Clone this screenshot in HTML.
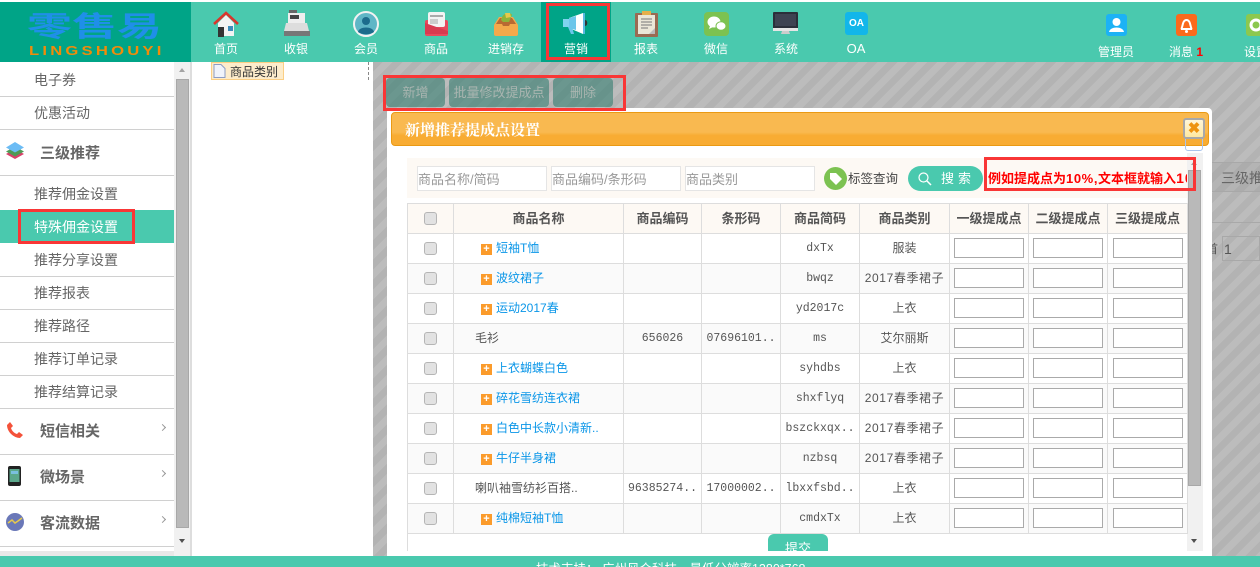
<!DOCTYPE html>
<html lang="zh"><head><meta charset="utf-8"><title>零售易</title>
<style>
html,body{margin:0;padding:0;width:1260px;height:567px;overflow:hidden;background:#fff}
*{box-sizing:border-box}
body{position:relative;font-family:"Liberation Sans","WenQuanYi Zen Hei","Noto Sans CJK SC",sans-serif;font-size:13px;color:#555}
.a{position:absolute}
.nav{position:absolute;top:2px;height:60px;background:#4ac9ae;left:191px;width:1069px}
.ni{position:absolute;top:41px;width:70px;text-align:center;color:#fff;font-size:12px;line-height:16px}
.ic{position:absolute}
.s{position:absolute;left:0;width:174px;color:#666;font-size:14px;line-height:16px;padding-left:34px}
.ln{position:absolute;left:0;width:174px;height:1px;background:#d0d0d0}
.h{position:absolute;left:40px;font-size:15px;font-weight:bold;color:#666;line-height:18px}
.ar{position:absolute;left:160px;width:5px;height:5px;border-top:1px solid #999;border-right:1px solid #999;transform:rotate(45deg)}
.btn{position:absolute;top:78px;height:29px;background:rgba(40,120,105,.55);border-radius:4px;color:#a9b5b0;text-align:center;line-height:29px;font-size:13px}
.fld{position:absolute;top:166px;height:25px;width:130px;background:#fff;border:1px solid #e5e5e5;color:#999;font-size:13px;line-height:25px;padding-left:0}
table{position:absolute;left:407px;top:203px;width:780px;table-layout:fixed;border-collapse:collapse;font-size:12px;color:#555}
td,th{border:1px solid #ddd;height:30px;padding:0 0 2px;text-align:center;overflow:hidden;white-space:nowrap}
th{background:#fdf9f4;font-size:13px;color:#555;font-weight:bold}
tr:nth-child(odd) td{background:#fafafa}
tr:nth-child(even) td{background:#fff}
td.m{font-family:"Liberation Mono","WenQuanYi Zen Hei",monospace;font-size:11.5px;padding-bottom:0}
.y{letter-spacing:.6px}
.n{text-align:left;padding-left:27px;color:#0a96e8;font-size:12px}
.n i{display:inline-block;width:11px;height:11px;background:#fb9b2b;color:#fff;font:bold 11px/10px "Liberation Sans",sans-serif;text-align:center;margin-right:4px;vertical-align:0}
.p{text-align:left;padding-left:21px;color:#555;font-size:12px}
.c{display:inline-block;width:13px;height:13px;background:#e2e2e2;border:1px solid #b5b5b5;border-radius:3px;vertical-align:middle}
.t{display:block;width:70px;height:20px;border:1px solid #aaa;background:#fff}
td.i{padding-left:4px;text-align:left}
td.i2{padding-left:5px;text-align:left}
</style></head><body>

<div class="a" style="left:0;top:2px;width:191px;height:60px;background:#00a487;overflow:hidden">
<div class="a" style="left:27px;top:-3px;width:140px;font:bold 45px/50px 'WenQuanYi Zen Hei','Noto Sans CJK SC',sans-serif;color:#1f8fe8;transform:scaleY(.62);transform-origin:center;white-space:nowrap">零售易</div>
<div class="a" style="left:29px;top:42px;font:bold 13px/14px 'Liberation Sans',sans-serif;color:#f08c0a;letter-spacing:2.5px;white-space:nowrap;transform:scaleX(1.28);transform-origin:0 0">LINGSHOUYI</div>
</div>
<div class="nav"></div>
<div class="a" style="left:541px;top:2px;width:70px;height:60px;background:#00a487"></div>
<div class="a" style="left:546px;top:3px;width:64px;height:57px;border:3px solid #f93636"></div>

<svg class="ic" style="left:213px;top:11px" width="26" height="26" viewBox="0 0 26 26"><path d="M5 12L13 4l8 8v13H5z" fill="#f3f3f3"/><rect x="5" y="16" width="6" height="10" fill="#333"/><rect x="15" y="15" width="5" height="5" fill="#3b8dbb"/><path d="M1 13L13 2l12 11" fill="none" stroke="#d9352c" stroke-width="2.6"/></svg>
<div class="ni" style="left:191px">首页</div>

<svg class="ic" style="left:283px;top:10px" width="27" height="27" viewBox="0 0 27 27"><rect x="6" y="0" width="8" height="3" fill="#666"/><rect x="5" y="3" width="17" height="10" fill="#eee"/><rect x="7" y="5" width="9" height="4" fill="#444"/><path d="M3 13h21l2 8H1z" fill="#ddd"/><rect x="1" y="21" width="26" height="5" fill="#777"/></svg>
<div class="ni" style="left:261px">收银</div>

<svg class="ic" style="left:353px;top:11px" width="26" height="26" viewBox="0 0 26 26"><circle cx="13" cy="13" r="12" fill="#5fb6c6" stroke="#f2f2f2" stroke-width="2"/><circle cx="13" cy="10" r="4" fill="#1c6c8c"/><path d="M5 21c1-6 15-6 16 0-4 3-12 3-16 0z" fill="#1c6c8c"/></svg>
<div class="ni" style="left:331px">会员</div>

<svg class="ic" style="left:424px;top:11px" width="24" height="26" viewBox="0 0 24 26"><rect x="1" y="9" width="23" height="16" rx="2" fill="#e9495d"/><rect x="4" y="1" width="17" height="15" rx="2" fill="#f3f3f3"/><rect x="6" y="4" width="13" height="2" fill="#aaa"/><rect x="6" y="8" width="8" height="5" fill="#ccc"/><path d="M1 12l23 8v3H1z" fill="#d93a50"/></svg>
<div class="ni" style="left:401px">商品</div>

<svg class="ic" style="left:492px;top:11px" width="28" height="26" viewBox="0 0 28 26"><path d="M2 14l5-8h14l5 8v9a2 2 0 0 1-2 2H4a2 2 0 0 1-2-2z" fill="#f4a94b"/><path d="M4 13l4-6h12l4 6H18l-1 2h-6l-1-2z" fill="#b96a32"/><path d="M9 9c1-7 9-9 11-5l-3 7h-6z" fill="#8fb33a"/><path d="M13 2h5l1 4-5 1z" fill="#e6c94c"/></svg>
<div class="ni" style="left:471px">进销存</div>

<svg class="ic" style="left:562px;top:12px" width="28" height="24" viewBox="0 0 28 24"><path d="M1 7h6v8H1z" fill="#7fd3ee"/><path d="M7 6L21 1v21L7 16z" fill="#fff"/><path d="M7 6l7-2v14l-7-2z" fill="#6cc6ea"/><rect x="21" y="1" width="2" height="21" fill="#58b9e0"/><path d="M23 8c3 0 3 6 0 6z" fill="#333"/><path d="M6 15h4l2 7H9z" fill="#6cc6ea"/></svg>
<div class="ni" style="left:541px">营销</div>

<svg class="ic" style="left:635px;top:11px" width="23" height="26" viewBox="0 0 23 26"><rect x="0" y="2" width="23" height="24" rx="1" fill="#9a6a52"/><rect x="3" y="4" width="17" height="19" fill="#ebe7d8"/><rect x="7" y="0" width="9" height="4" fill="#e5b04c"/><path d="M6 8h11M6 11h11M6 14h11M6 17h7" stroke="#777" stroke-width="1"/><path d="M14 23l6-6v6z" fill="#bbb"/></svg>
<div class="ni" style="left:611px">报表</div>

<svg class="ic" style="left:704px;top:12px" width="25" height="24" viewBox="0 0 25 24"><rect width="25" height="24" rx="4" fill="#7cc251"/><ellipse cx="10" cy="10" rx="6.5" ry="5.5" fill="#fff"/><path d="M6 14l-1 3 4-2z" fill="#fff"/><ellipse cx="17" cy="14" rx="5" ry="4.3" fill="#fff" stroke="#7cc251"/></svg>
<div class="ni" style="left:681px">微信</div>

<svg class="ic" style="left:773px;top:12px" width="26" height="24" viewBox="0 0 26 24"><rect width="25" height="17" rx="1" fill="#2b2f3a"/><rect x="2" y="2" width="21" height="12" fill="#3e4352"/><rect y="16" width="25" height="3" fill="#e5e5e5"/><path d="M9 19h7l1 3H8z" fill="#ccc"/></svg>
<div class="ni" style="left:751px">系统</div>

<div class="a" style="left:845px;top:12px;width:23px;height:23px;background:#12b6ea;border-radius:3px 5px 3px 3px;color:#fff;font:bold 10px/23px 'Liberation Sans',sans-serif;text-align:center">OA</div>
<div class="ni" style="left:821px;font-size:13px">OA</div>

<svg class="ic" style="left:1106px;top:14px" width="21" height="22" viewBox="0 0 21 22"><rect width="21" height="22" rx="3" fill="#1cb2f5"/><circle cx="10.500" cy="8" r="4" fill="#fff"/><path d="M3 18c1-6 14-6 15 0z" fill="#fff"/></svg>
<div class="a" style="left:1081px;top:44px;width:70px;text-align:center;color:#fff;font-size:12px;line-height:16px">管理员</div>
<svg class="ic" style="left:1176px;top:14px" width="21" height="22" viewBox="0 0 21 22"><rect width="21" height="22" rx="3" fill="#fb6a1c"/><path d="M5 15c2-1 1-9 5.500-9s3.500 8 5.500 9z" fill="none" stroke="#fff" stroke-width="2"/><circle cx="10.500" cy="17.500" r="1.500" fill="#fff"/></svg>
<div class="a" style="left:1169px;top:44px;color:#fff;font-size:12px;line-height:16px;white-space:nowrap">消息 <b style="color:#f00">1</b></div>
<svg class="ic" style="left:1246px;top:14px" width="21" height="22" viewBox="0 0 21 22"><rect width="21" height="22" rx="3" fill="#8cc84e"/><circle cx="10" cy="11" r="5" fill="none" stroke="#fff" stroke-width="3"/></svg>
<div class="a" style="left:1244px;top:44px;color:#fff;font-size:12px;line-height:16px;white-space:nowrap">设置</div>

<!-- sidebar -->
<div class="s" style="top:72px">电子券</div><div class="ln" style="top:96px"></div>
<div class="s" style="top:105px">优惠活动</div><div class="ln" style="top:129px"></div>
<svg class="ic" style="left:6px;top:142px" width="18" height="18" viewBox="0 0 18 18"><path d="M9 7l9 5-9 5-9-5z" fill="#d8416a"/><path d="M9 4.500l9 5-9 5-9-5z" fill="#4f9a55"/><path d="M9 0l9 5.500-9 5-9-5z" fill="#6cbcf5"/></svg>
<div class="h" style="top:145px">三级推荐</div><div class="ln" style="top:175px"></div>
<div class="s" style="top:186px">推荐佣金设置</div>
<div class="a" style="left:0;top:210px;width:174px;height:33px;background:#4ac9ae"></div>
<div class="s" style="top:219px;color:#fff">特殊佣金设置</div>
<div class="a" style="left:18px;top:209px;width:117px;height:35px;border:3px solid #f93636"></div>
<div class="s" style="top:252px">推荐分享设置</div><div class="ln" style="top:276px"></div>
<div class="s" style="top:285px">推荐报表</div><div class="ln" style="top:309px"></div>
<div class="s" style="top:318px">推荐路径</div><div class="ln" style="top:342px"></div>
<div class="s" style="top:351px">推荐订单记录</div><div class="ln" style="top:375px"></div>
<div class="s" style="top:384px">推荐结算记录</div><div class="ln" style="top:408px"></div>
<svg class="ic" style="left:6px;top:422px" width="17" height="17" viewBox="0 0 17 17"><path d="M1 3l3-3 3 4-2 2c1 3 3 5 6 6l2-2 4 3-3 3C8 16 1 10 1 3z" fill="#f4523a"/></svg>
<div class="h" style="top:423px">短信相关</div><div class="ar" style="top:425px"></div><div class="ln" style="top:454px"></div>
<svg class="ic" style="left:8px;top:466px" width="13" height="20" viewBox="0 0 13 20"><rect width="13" height="20" rx="2" fill="#222"/><rect x="1.500" y="3" width="10" height="13" fill="#5ba88c"/><rect x="3" y="5" width="7" height="3" fill="#7ac0e0"/></svg>
<div class="h" style="top:469px">微场景</div><div class="ar" style="top:471px"></div><div class="ln" style="top:500px"></div>
<svg class="ic" style="left:6px;top:513px" width="18" height="18" viewBox="0 0 18 18"><circle cx="9" cy="9" r="9" fill="#6a78b8"/><path d="M2 10l4-3 3 3 3-2 4-3" fill="none" stroke="#e6c94c" stroke-width="1.500"/></svg>
<div class="h" style="top:515px">客流数据</div><div class="ar" style="top:517px"></div><div class="ln" style="top:546px"></div>
<div class="a" style="left:0;top:551px;width:191px;height:5px;background:#e8e8e8"></div>

<!-- sidebar scrollbar -->
<div class="a" style="left:174px;top:62px;width:17px;height:494px;background:#f1f1f1"></div>
<div class="a" style="left:176px;top:79px;width:13px;height:449px;background:#b9b9b9;border:1px solid #a8a8a8"></div>
<div class="a" style="left:179px;top:68px;border:3.500px solid transparent;border-bottom:4px solid #a3a3a3;border-top:0"></div>
<div class="a" style="left:179px;top:539px;border:3.500px solid transparent;border-top:4px solid #505050;border-bottom:0"></div>
<div class="a" style="left:190px;top:62px;width:2px;height:494px;background:#ddd"></div>

<!-- tree -->
<div class="a" style="left:211px;top:62px;width:73px;height:18px;background:#fdeccb;border:1px solid #fbcf85"></div>
<svg class="ic" style="left:213px;top:64px" width="13" height="14" viewBox="0 0 13 14"><path d="M1 .5h7l4 4v9H1z" fill="#f0f3fb" stroke="#8d9cc4"/></svg>
<div class="a" style="left:230px;top:64px;font-size:12px;line-height:16px;color:#333;white-space:nowrap">商品类别</div>
<div class="a" style="left:368px;top:62px;width:1px;height:18px;border-left:1px dashed #888"></div>

<!-- stripes -->
<div class="a" style="left:373px;top:62px;width:887px;height:494px;background:repeating-linear-gradient(135deg,#b3b3b3 0,#b3b3b3 7px,#bcbcbc 7px,#bcbcbc 14px)"></div>

<!-- background page behind overlay -->
<div class="a" style="left:1212px;top:162px;width:48px;height:30px;background:rgba(120,120,120,.12);border-top:1px solid #a8a8a8;border-bottom:1px solid #a8a8a8"></div>
<div class="a" style="left:1212px;top:222px;width:48px;height:1px;background:#a8a8a8"></div>
<div class="a" style="left:1221px;top:170px;font-size:14px;line-height:16px;color:#666;white-space:nowrap">三级推</div>
<div class="a" style="left:1206px;top:241px;font-size:12px;line-height:16px;color:#555">首</div>
<div class="a" style="left:1222px;top:236px;width:38px;height:25px;border:1px solid #a8a8a8;color:#555;font-size:14px;line-height:24px;padding-left:1px">1</div>

<!-- toolbar -->
<div class="btn" style="left:386px;width:59px">新增</div>
<div class="btn" style="left:449px;width:100px">批量修改提成点</div>
<div class="btn" style="left:553px;width:60px">删除</div>

<!-- modal -->
<div class="a" style="left:387px;top:108px;width:825px;height:448px;background:#fff;border-radius:4px 4px 0 0"></div>
<div class="a" style="left:383px;top:75px;width:243px;height:36px;border:3px solid #f93636"></div>
<div class="a" style="left:391px;top:112px;width:818px;height:34px;background:linear-gradient(#f9b950 0,#f9b950 60%,#f8ac33 70%,#f8ac33 100%);border:1px solid #ea9a14;border-radius:4px;color:#fff;font:bold 15px/37px 'Liberation Serif','Noto Serif CJK SC',serif;padding-left:13px;overflow:hidden">新增推荐提成点设置</div>

<div class="a" style="left:407px;top:158px;width:780px;height:40px;background:#fdf9f4"></div>
<div class="fld" style="left:417px">商品名称/简码</div>
<div class="fld" style="left:551px">商品编码/条形码</div>
<div class="fld" style="left:685px">商品类别</div>
<svg class="ic" style="left:824px;top:167px" width="23" height="23" viewBox="0 0 23 23"><circle cx="11.500" cy="11.500" r="11.500" fill="#7cc251"/><path d="M6 6h6l6 6-6 6-6-6z" fill="#fff"/></svg>
<div class="a" style="left:848px;top:171px;color:#444;font-size:12.500px;line-height:16px;white-space:nowrap">标签查询</div>
<div class="a" style="left:908px;top:166px;width:75px;height:25px;background:#4ac9ae;border-radius:13px"></div>
<svg class="ic" style="left:918px;top:172px" width="14" height="14" viewBox="0 0 14 14"><circle cx="5.500" cy="5.500" r="4.500" fill="none" stroke="#fff" stroke-width="1.200"/><path d="M9 9l4 4" stroke="#fff" stroke-width="1.500"/></svg>
<div class="a" style="left:941px;top:171px;color:#fff;font-size:13px;line-height:16px;letter-spacing:4px;white-space:nowrap">搜索</div>
<div class="a" style="left:988px;top:170px;width:199px;height:18px;overflow:hidden;color:#f00;font-weight:bold;font-size:13px;line-height:17px;white-space:nowrap">例如提成点为<span style="letter-spacing:.6px">10%,</span>文本框就输入<span style="letter-spacing:1px;font-size:14px">10</span></div>

<!-- modal scrollbar -->
<div class="a" style="left:1187px;top:153px;width:16px;height:398px;background:#f1f1f1"></div>
<div class="a" style="left:1188px;top:170px;width:13px;height:316px;background:#b9b9b9;border:1px solid #a8a8a8"></div>
<div class="a" style="left:1191px;top:161px;border:3.500px solid transparent;border-bottom:4px solid #a3a3a3;border-top:0"></div>
<div class="a" style="left:1191px;top:539px;border:3.500px solid transparent;border-top:4px solid #505050;border-bottom:0"></div>
<div class="a" style="left:984px;top:157px;width:212px;height:34px;border:3px solid #f93636"></div>
<div class="a" style="left:1185px;top:126px;width:18px;height:25px;border:1px solid #a9c4ec;border-radius:3px"></div>
<div class="a" style="left:1183px;top:118px;width:22px;height:21px;background:linear-gradient(#fff6d8,#ffe9a0);border:2px solid #a8a8a8;border-radius:3px;color:#ee9410;font:bold 15px/17px 'Liberation Sans',sans-serif;text-align:center">✖</div>

<table>
<colgroup><col style="width:46px"><col style="width:170px"><col style="width:78px"><col style="width:79px"><col style="width:79px"><col style="width:90px"><col style="width:79px"><col style="width:79px"><col style="width:80px"></colgroup>
<tr><th><span class="c"></span></th><th>商品名称</th><th>商品编码</th><th>条形码</th><th>商品简码</th><th>商品类别</th><th>一级提成点</th><th>二级提成点</th><th>三级提成点</th></tr>
<tr><td><span class="c"></span></td><td class="n"><i>+</i>短袖T恤</td><td></td><td></td><td class="m">dxTx</td><td>服装</td><td class="i"><span class="t"></span></td><td class="i"><span class="t"></span></td><td class="i2"><span class="t"></span></td></tr>
<tr><td><span class="c"></span></td><td class="n"><i>+</i>波纹裙子</td><td></td><td></td><td class="m">bwqz</td><td class="y">2017春季裙子</td><td class="i"><span class="t"></span></td><td class="i"><span class="t"></span></td><td class="i2"><span class="t"></span></td></tr>
<tr><td><span class="c"></span></td><td class="n"><i>+</i>运动2017春</td><td></td><td></td><td class="m">yd2017c</td><td>上衣</td><td class="i"><span class="t"></span></td><td class="i"><span class="t"></span></td><td class="i2"><span class="t"></span></td></tr>
<tr><td><span class="c"></span></td><td class="p">毛衫</td><td class="m">656026</td><td class="m">07696101..</td><td class="m">ms</td><td>艾尔丽斯</td><td class="i"><span class="t"></span></td><td class="i"><span class="t"></span></td><td class="i2"><span class="t"></span></td></tr>
<tr><td><span class="c"></span></td><td class="n"><i>+</i>上衣蝴蝶白色</td><td></td><td></td><td class="m">syhdbs</td><td>上衣</td><td class="i"><span class="t"></span></td><td class="i"><span class="t"></span></td><td class="i2"><span class="t"></span></td></tr>
<tr><td><span class="c"></span></td><td class="n"><i>+</i>碎花雪纺连衣裙</td><td></td><td></td><td class="m">shxflyq</td><td class="y">2017春季裙子</td><td class="i"><span class="t"></span></td><td class="i"><span class="t"></span></td><td class="i2"><span class="t"></span></td></tr>
<tr><td><span class="c"></span></td><td class="n"><i>+</i>白色中长款小清新..</td><td></td><td></td><td class="m">bszckxqx..</td><td class="y">2017春季裙子</td><td class="i"><span class="t"></span></td><td class="i"><span class="t"></span></td><td class="i2"><span class="t"></span></td></tr>
<tr><td><span class="c"></span></td><td class="n"><i>+</i>牛仔半身裙</td><td></td><td></td><td class="m">nzbsq</td><td class="y">2017春季裙子</td><td class="i"><span class="t"></span></td><td class="i"><span class="t"></span></td><td class="i2"><span class="t"></span></td></tr>
<tr><td><span class="c"></span></td><td class="p">喇叭袖雪纺衫百搭..</td><td class="m">96385274..</td><td class="m">17000002..</td><td class="m">lbxxfsbd..</td><td>上衣</td><td class="i"><span class="t"></span></td><td class="i"><span class="t"></span></td><td class="i2"><span class="t"></span></td></tr>
<tr><td><span class="c"></span></td><td class="n"><i>+</i>纯棉短袖T恤</td><td></td><td></td><td class="m">cmdxTx</td><td>上衣</td><td class="i"><span class="t"></span></td><td class="i"><span class="t"></span></td><td class="i2"><span class="t"></span></td></tr>
</table>
<div class="a" style="left:407px;top:533px;width:1px;height:18px;background:#ddd"></div>
<div class="a" style="left:768px;top:534px;width:60px;height:17px;background:#4ac9ae;border-radius:6px 6px 0 0;overflow:hidden;color:#fff;font-size:13px;line-height:16px;text-align:center;padding-top:7px">提交</div>

<!-- footer -->
<div class="a" style="left:0;top:556px;width:1260px;height:11px;background:#4ac9ae;overflow:hidden"><div class="a" style="left:536px;top:5px;color:#fff;font-size:12.500px;line-height:16px;white-space:nowrap">技术支持： 广州风众科技　最低分辨率1280*768</div></div>
</body></html>
